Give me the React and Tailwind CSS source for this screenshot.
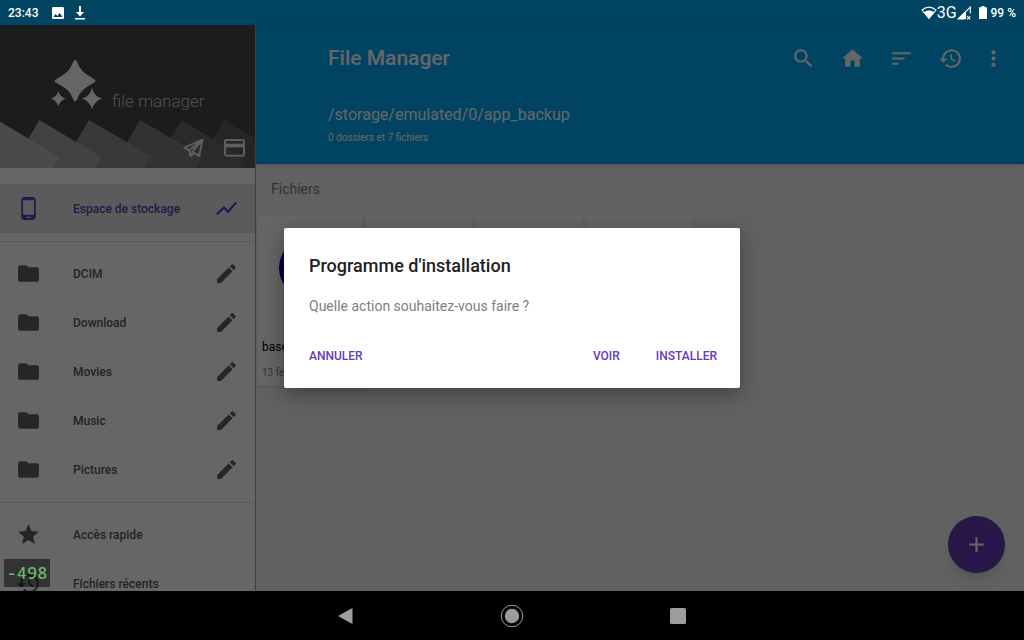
import React, { useState } from 'react';
import {
  MdAdd,
  MdEdit,
  MdFolder,
  MdHistory,
  MdHome,
  MdImage,
  MdMoreVert,
  MdPhoneAndroid,
  MdSearch,
  MdShowChart,
  MdSort,
  MdStar,
} from 'react-icons/md';

const folders = ['DCIM', 'Download', 'Movies', 'Music', 'Pictures'];

const IconDownloadDone = () => (
  <svg aria-hidden="true" viewBox="0 0 12 14" className="w-3 h-[14px]" fill="currentColor">
    <path d="M5 0h2v6h3l-4 4.5L2 6h3z" />
    <path d="M1 12h10v1.5H1z" />
  </svg>
);

const IconWifi = () => (
  <svg aria-hidden="true" viewBox="0 0 45 39" className="w-4 h-[14px]">
    <path d="M3 11C15 1 30 1 42 11L22.500 35z" fill="none" stroke="currentColor" strokeWidth="3" />
    <path d="M8 17c9-6 20-6 29 0L22.500 35z" fill="currentColor" />
  </svg>
);

const IconSignal = () => (
  <svg aria-hidden="true" viewBox="0 0 39 39" className="w-[14px] h-[14px]">
    <path d="M22 36H3L37 3v18" fill="none" stroke="currentColor" strokeWidth="3" />
    <path d="M3 36L25 14v22z" fill="currentColor" />
    <path d="M28 28l9 9M37 28l-9 9" stroke="currentColor" strokeWidth="3" />
  </svg>
);

const IconBattery = () => (
  <svg aria-hidden="true" viewBox="0 0 8 13" className="w-2 h-[13px]" fill="currentColor">
    <path d="M2.500 0h3v1.300H7.500q.5 0 .5.5v10.700q0 .5-.5.5H.5q-.5 0-.5-.5V1.800q0-.5.5-.5h2z" />
  </svg>
);

const IconTelegram = () => (
  <svg aria-hidden="true" viewBox="0 0 60 56" className="w-[21px] h-5">
    <path
      d="M56 4L4 27l14 8 4 16 9-9 15 8z M18 35L56 4 27 39v8"
      fill="none"
      stroke="currentColor"
      strokeWidth="6"
      strokeLinejoin="round"
    />
  </svg>
);

const IconCard = () => (
  <svg aria-hidden="true" viewBox="0 0 63 54" className="w-[21px] h-[18px]">
    <rect x="3" y="3" width="57" height="47" rx="4" fill="none" stroke="currentColor" strokeWidth="6" />
    <path d="M3 14h57v11H3z" fill="currentColor" />
  </svg>
);

const Banner = () => (
  <svg aria-hidden="true" viewBox="0 75 765 429" className="block w-full">
    <rect y="75" width="765" height="429" fill="#44464a" />
    <path d="M640 412L672 360L765 413V504H640z" fill="#5c5e62" />
    <path d="M460 504L545 360L735 475L717 504z" fill="#68696d" />
    <path d="M335 504L420 360L607 468L588 504z" fill="#7c7e81" />
    <path d="M182 504L267 360L452 468L432 504z" fill="#909090" />
    <path d="M34 504L118 360L303 470L285 504z" fill="#a5a5a5" />
    <path d="M0 365L178 470L160 504H0z" fill="#bababa" />
    <g fill="#ffffff">
      <path d="M225 180Q230 180 234 192Q244 215 264 226L284 239Q289 243 284 247L264 259Q244 270 234 292Q230 304 225 304Q221 304 217 292Q207 270 187 259L166 247Q161 243 166 239L187 226Q207 215 217 192Q221 180 225 180z" />
      <path d="M175 273Q180 291 197 296Q180 301 175 319Q170 301 153 296Q170 291 175 273z" />
      <path d="M276 264Q283 290 306 296Q283 302 276 328Q269 302 246 296Q269 290 276 264z" />
    </g>
  </svg>
);

const StatusBar = () => (
  <div className="h-[25px] shrink-0 bg-[#014462] text-white flex items-center justify-between px-2 text-xs font-medium">
    <div className="flex items-center gap-2">
      <span>23:43</span>
      <MdImage className="w-4 h-4 ml-1" />
      <IconDownloadDone />
    </div>
    <div className="flex items-center">
      <IconWifi />
      <span className="text-base font-normal">3G</span>
      <IconSignal />
      <span className="ml-2 mr-1">
        <IconBattery />
      </span>
      <span>99 %</span>
    </div>
  </div>
);

const DrawerRow = ({ icon: Icon, label, action: Action, actionLabel, active = false }) => (
  <li
    className={`h-[49px] px-4 flex items-center ${
      active ? 'bg-[#e3e3e3] text-[#673ab7]' : 'text-[#595959]'
    }`}
  >
    <a href="#" className="flex-1 flex items-center gap-8 text-xs font-medium">
      <Icon className={`w-[25px] h-[25px] ${active ? '' : 'text-[#606060]'}`} />
      {label}
    </a>
    {Action && (
      <button type="button" aria-label={actionLabel} className={active ? '' : 'text-[#606060]'}>
        <Action className="w-[25px] h-[25px]" />
      </button>
    )}
  </li>
);

const Sidebar = () => (
  <aside className="w-64 shrink-0 bg-white border-r border-[#a0a0a0] overflow-hidden">
    <div className="relative">
      <Banner />
      <div className="absolute left-28 top-16 text-[17px] leading-6 font-light text-[#c8c8c8]">
        file manager
      </div>
      <div className="absolute right-[10px] bottom-[10px] flex items-center gap-5 text-[#e8e8e8]">
        <button type="button" aria-label="Telegram">
          <IconTelegram />
        </button>
        <button type="button" aria-label="Paiement">
          <IconCard />
        </button>
      </div>
    </div>

    <nav>
      <ul className="pt-4 pb-2 border-b border-[#e4e4e4]">
        <DrawerRow
          icon={MdPhoneAndroid}
          label="Espace de stockage"
          action={MdShowChart}
          actionLabel="Analyser"
          active
        />
      </ul>
      <ul className="pt-[7px] pb-2 border-b border-[#e4e4e4]">
        {folders.map((name) => (
          <DrawerRow
            key={name}
            icon={MdFolder}
            label={name}
            action={MdEdit}
            actionLabel={`Modifier ${name}`}
          />
        ))}
      </ul>
      <ul className="pt-[7px]">
        <DrawerRow icon={MdStar} label="Accès rapide" />
        <DrawerRow icon={MdHistory} label="Fichiers récents" />
      </ul>
    </nav>
  </aside>
);

const Toolbar = () => (
  <header className="h-[139px] shrink-0 bg-[#03a9f4] text-white pl-[72px] pr-[18px] shadow">
    <div className="h-[66px] flex items-center justify-between">
      <h1 className="text-[21px] leading-8 font-medium">File Manager</h1>
      <div className="flex items-center gap-6">
        <button type="button" aria-label="Rechercher">
          <MdSearch className="w-[25px] h-[25px]" />
        </button>
        <button type="button" aria-label="Accueil">
          <MdHome className="w-[25px] h-[25px]" />
        </button>
        <button type="button" aria-label="Trier">
          <MdSort className="w-[25px] h-[25px]" />
        </button>
        <button type="button" aria-label="Historique">
          <MdHistory className="w-[25px] h-[25px]" />
        </button>
        <button type="button" aria-label="Plus" className="-ml-1.5">
          <MdMoreVert className="w-[25px] h-[25px]" />
        </button>
      </div>
    </div>
    <p className="pt-3 text-base">/storage/emulated/0/app_backup</p>
    <p className="pt-[3px] text-[10px] leading-4">0 dossiers et 7 fichiers</p>
  </header>
);

const FileGrid = () => (
  <section className="flex-1">
    <h2 className="pt-[15px] pb-4 px-[15px] text-sm leading-5 text-[#7d7d7d]">Fichiers</h2>
    <div className="flex gap-[5px] pl-px">
      <div className="w-[105px] h-[171px] bg-[#fdfdfd] shadow-sm">
        <div className="h-[106px] flex items-center justify-center">
          <div className="w-[62px] h-[62px] rounded-full bg-[#06069a]" />
        </div>
        <div className="px-[5px] pt-4 text-xs leading-5 text-black">base.apk</div>
        <div className="px-[5px] pt-2 text-[10px] leading-4 text-[#8c8c8c]">13 février</div>
      </div>
      <div className="w-[105px] h-[171px] bg-[#fdfdfd]" />
      <div className="w-[105px] h-[171px] bg-[#fdfdfd]" />
      <div className="w-[105px] h-[171px] bg-[#fdfdfd]" />
    </div>
  </section>
);

const InstallDialog = ({ onClose }) => (
  <div className="absolute inset-0 bg-black/60 flex items-center justify-center">
    <div
      role="dialog"
      aria-modal="true"
      aria-labelledby="install-title"
      className="w-[456px] h-40 rounded-xs bg-white pl-[25px] pr-[23px] pt-6 shadow-[0_6px_20px_rgba(0,0,0,0.35)]"
    >
      <h2 id="install-title" className="text-lg leading-7 font-medium text-[#212121]">
        Programme d'installation
      </h2>
      <p className="pt-4 text-sm text-[#808080]">Quelle action souhaitez-vous faire ?</p>
      <div className="pt-8 flex items-center text-xs font-medium text-[#673ab7]">
        <button type="button" onClick={onClose}>
          ANNULER
        </button>
        <button type="button" className="ml-auto mr-9">
          VOIR
        </button>
        <button type="button">INSTALLER</button>
      </div>
    </div>
  </div>
);

const NavigationBar = () => (
  <div className="h-[49px] shrink-0 bg-black text-[#9c9c9c] flex items-center justify-center gap-[142px]">
    <button type="button" aria-label="Retour">
      <svg viewBox="0 0 24 24" className="w-6 h-6" fill="currentColor">
        <path d="M4 12L17.500 4.500q1-.5 1 .5v14q0 1-1 .5z" />
      </svg>
    </button>
    <button type="button" aria-label="Accueil système">
      <svg viewBox="0 0 24 24" className="w-6 h-6">
        <circle cx="12" cy="12" r="10.800" fill="none" stroke="currentColor" />
        <circle cx="12" cy="12" r="7.200" fill="currentColor" />
      </svg>
    </button>
    <button type="button" aria-label="Applications récentes">
      <svg viewBox="0 0 24 24" className="w-6 h-6" fill="currentColor">
        <rect x="4" y="4" width="16" height="16" rx="1.500" />
      </svg>
    </button>
  </div>
);

const App = () => {
  const [dialogOpen, setDialogOpen] = useState(true);

  return (
    <div className="h-screen flex flex-col overflow-hidden font-[Roboto,sans-serif]">
      <StatusBar />
      <div className="relative flex-1 min-h-0 flex">
        <Sidebar />
        <main className="flex-1 flex flex-col bg-[#f2f2f2]">
          <Toolbar />
          <FileGrid />
        </main>
        <button
          type="button"
          aria-label="Ajouter"
          className="absolute right-[19px] bottom-[18px] w-[57px] h-[57px] rounded-full bg-[#673ab7] text-white shadow-lg flex items-center justify-center"
        >
          <MdAdd className="w-[25px] h-[25px]" />
        </button>
        {dialogOpen && <InstallDialog onClose={() => setDialogOpen(false)} />}
        {/* battery current readout, floats above everything */}
        <div className="absolute left-1 bottom-1 w-[46px] h-7 bg-black/50 text-[#66bb6a] font-['Noto_Sans_Mono','DejaVu_Sans_Mono',monospace] font-medium text-[17px] leading-7 text-center">
          -498
        </div>
      </div>
      <NavigationBar />
    </div>
  );
};

export default App;
